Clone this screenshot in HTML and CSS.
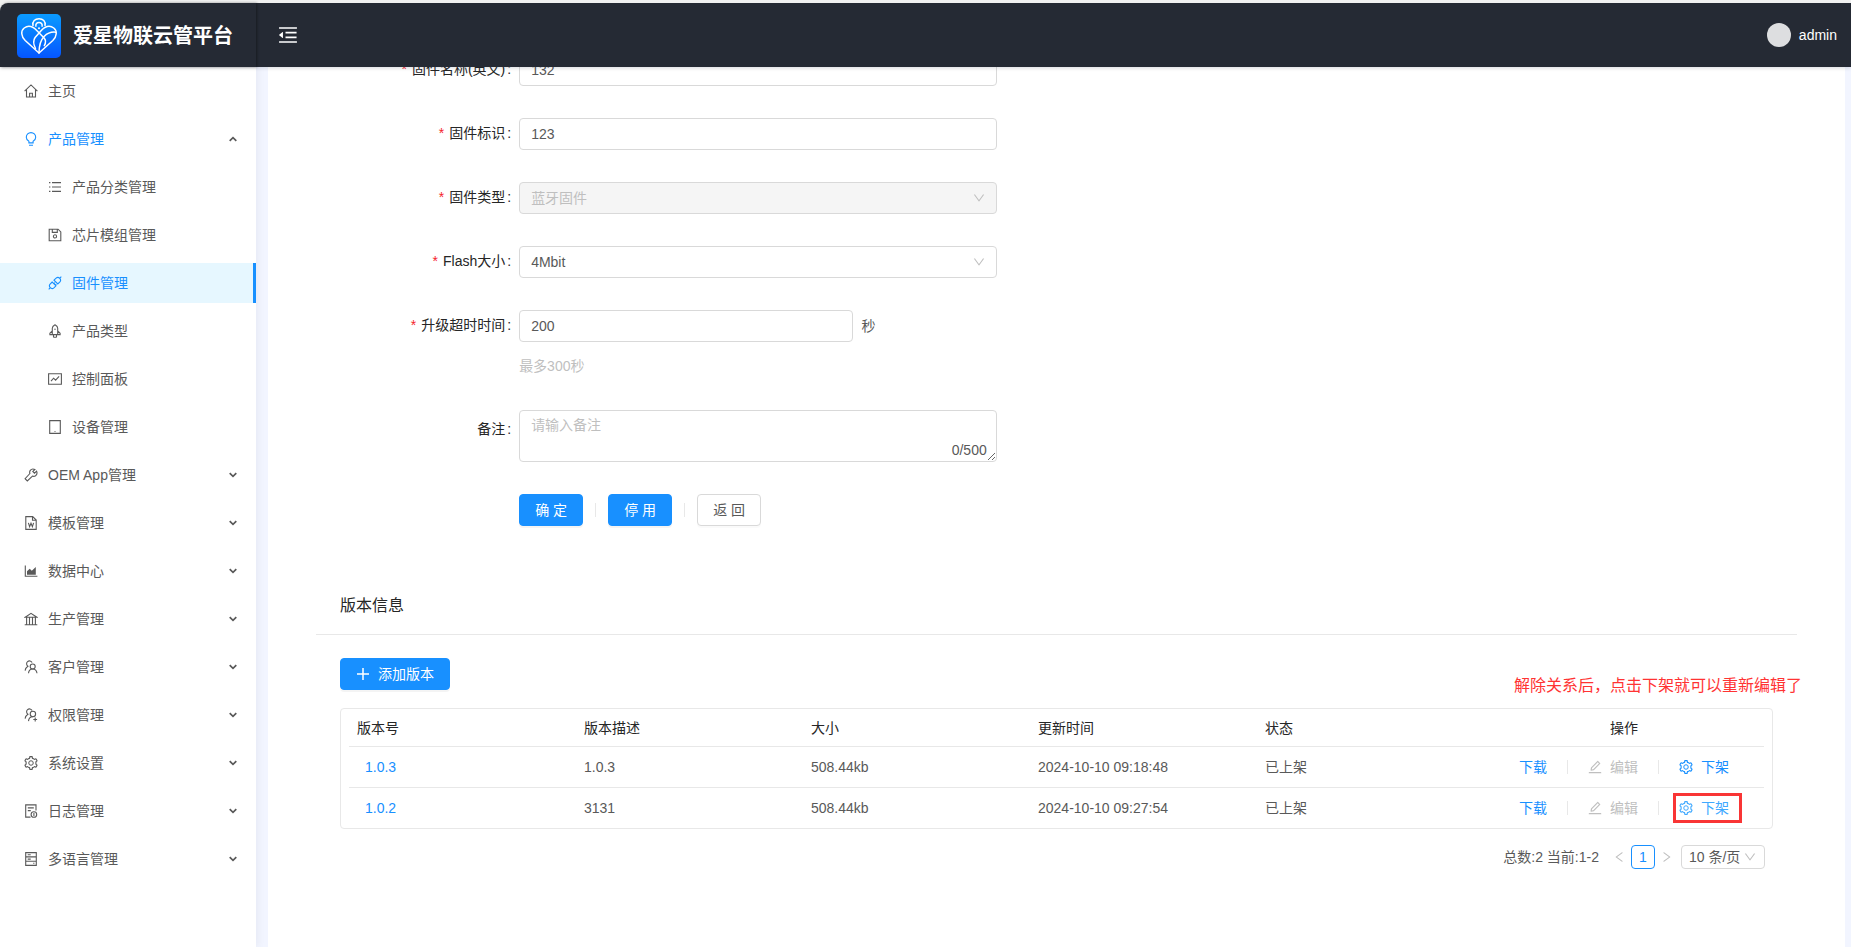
FILE: index.html
```html
<!DOCTYPE html>
<html lang="zh-CN">
<head>
<meta charset="utf-8">
<meta name="viewport" content="width=device-width, initial-scale=1">
<title>爱星物联云管平台</title>
<link rel="stylesheet" href="styles.css">
</head>
<body>
<svg class="sprite" aria-hidden="true">
  <symbol id="i-down" viewBox="64 64 896 896"><path d="M884 256h-75c-5.1 0-9.9 2.5-12.9 6.6L512 654.2 227.9 262.6c-3-4.1-7.8-6.6-12.9-6.6h-75c-6.5 0-10.3 7.4-6.5 12.7l352.6 486.1c12.8 17.6 39 17.6 51.7 0l352.6-486.1c3.9-5.3.1-12.7-6.4-12.7z"/></symbol>
  <symbol id="i-caret" viewBox="0 0 10 10"><path d="M1.7 3.2 5 6.4 8.3 3.2" fill="none" stroke="currentColor" stroke-width="1.7"/></symbol>
  <symbol id="i-setting" viewBox="64 64 896 896"><path d="M924.8 625.7l-65.5-56c3.1-19 4.7-38.4 4.7-57.8s-1.6-38.8-4.7-57.8l65.5-56a32.03 32.03 0 0 0 9.3-35.2l-.9-2.6a443.74 443.74 0 0 0-79.7-137.9l-1.8-2.1a32.12 32.12 0 0 0-35.1-9.5l-81.3 28.9c-30-24.6-63.5-44-99.7-57.6l-15.7-85a32.05 32.05 0 0 0-25.8-25.7l-2.7-.5c-52.1-9.4-106.9-9.4-159 0l-2.7.5a32.05 32.05 0 0 0-25.8 25.7l-15.8 85.4a351.86 351.86 0 0 0-99 57.4l-81.9-29.1a32 32 0 0 0-35.1 9.5l-1.8 2.1a446.02 446.02 0 0 0-79.7 137.9l-.9 2.6c-4.5 12.5-.8 26.5 9.3 35.2l66.3 56.6c-3.1 18.8-4.6 38-4.6 57.1 0 19.2 1.5 38.4 4.6 57.1L99 625.5a32.03 32.03 0 0 0-9.3 35.2l.9 2.6c18.1 50.4 44.9 96.9 79.7 137.9l1.8 2.1a32.12 32.12 0 0 0 35.1 9.5l81.9-29.1c29.8 24.5 63.1 43.9 99 57.4l15.8 85.4a32.05 32.05 0 0 0 25.8 25.7l2.7.5a449.4 449.4 0 0 0 159 0l2.7-.5a32.05 32.05 0 0 0 25.8-25.7l15.7-85a350 350 0 0 0 99.7-57.6l81.3 28.9a32 32 0 0 0 35.1-9.5l1.8-2.1c34.8-41.1 61.6-87.5 79.7-137.9l.9-2.6c4.5-12.3.8-26.3-9.3-35zM788.3 465.9c2.5 15.1 3.8 30.6 3.8 46.1s-1.3 31-3.8 46.1l-6.6 40.1 74.7 63.9a370.03 370.03 0 0 1-42.6 73.6L721 702.8l-31.4 25.8c-23.9 19.6-50.5 35-79.3 45.8l-38.1 14.3-17.9 97a377.5 377.5 0 0 1-85 0l-17.9-97.2-37.8-14.5c-28.5-10.8-55-26.2-78.7-45.7l-31.4-25.9-93.4 33.2c-17-22.9-31.2-47.6-42.6-73.6l75.5-64.5-6.5-40c-2.4-14.9-3.7-30.3-3.7-45.5 0-15.3 1.2-30.6 3.7-45.5l6.5-40-75.5-64.5c11.3-26.1 25.6-50.7 42.6-73.6l93.4 33.2 31.4-25.9c23.7-19.5 50.2-34.9 78.7-45.7l37.9-14.3 17.9-97.2c28.1-3.2 56.8-3.2 85 0l17.9 97 38.1 14.3c28.7 10.8 55.4 26.2 79.3 45.8l31.4 25.8 92.8-32.9c17 22.9 31.2 47.6 42.6 73.6L781.8 426l6.5 39.9z"/><circle cx="512" cy="512" r="144" fill="none" stroke="currentColor" stroke-width="64"/></symbol>
  <symbol id="i-edit" viewBox="64 64 896 896"><path d="M257.7 752c2 0 4-.2 6-.5L431.9 722c2-.4 3.9-1.3 5.3-2.8l423.9-423.9a9.96 9.96 0 0 0 0-14.1L694.9 114.9c-1.9-1.9-4.4-2.9-7.1-2.9s-5.2 1-7.1 2.9L256.8 538.8c-1.5 1.5-2.4 3.3-2.8 5.3l-29.5 168.2a33.5 33.5 0 0 0 9.4 29.8c6.6 6.4 14.9 9.9 23.8 9.9zm67.4-174.4L687.8 215l73.3 73.3-362.7 362.6-88.9 15.7 15.6-89zM880 836H144c-17.7 0-32 14.3-32 32v36c0 4.4 3.6 8 8 8h784c4.4 0 8-3.6 8-8v-36c0-17.7-14.3-32-32-32z"/></symbol>
  <symbol id="i-fold" viewBox="64 64 896 896"><path d="M408 442h480c4.400 0 8-3.600 8-8v-56c0-4.400-3.600-8-8-8H408c-4.400 0-8 3.600-8 8v56c0 4.400 3.600 8 8 8zm-8 204c0 4.400 3.600 8 8 8h480c4.400 0 8-3.600 8-8v-56c0-4.400-3.600-8-8-8H408c-4.400 0-8 3.600-8 8v56zm504-486H120c-4.400 0-8 3.600-8 8v56c0 4.400 3.600 8 8 8h784c4.400 0 8-3.600 8-8v-56c0-4.400-3.600-8-8-8zm0 632H120c-4.400 0-8 3.600-8 8v56c0 4.400 3.600 8 8 8h784c4.400 0 8-3.600 8-8v-56c0-4.400-3.600-8-8-8zM115.400 518.900L271.700 642c5.800 4.600 14.400.5 14.400-6.900V388.900c0-7.400-8.500-11.500-14.400-6.900L115.400 505.100a8.740 8.740 0 0 0 0 13.800z"/></symbol>
  <symbol id="i-home" viewBox="0 0 14 14"><path d="M.6 7.100 7 .9l6.400 6.200M2.500 5.800v7.200h9V5.800M5.600 13V9.200h2.800V13" class="line"/></symbol>
  <symbol id="i-bulb" viewBox="0 0 14 14"><path d="M4.900 10.900V9.300C3.200 8.400 2.300 6.900 2.300 5.300a4.700 4.700 0 0 1 9.400 0c0 1.600-.9 3.100-2.600 4v1.600zM5 13.300h4" class="line"/></symbol>
  <symbol id="i-list" viewBox="0 0 14 14"><path d="M4 2.600h9M4 7h9M4 11.400h9M1 2.600h1.400M1 7h1.400M1 11.400h1.400" class="line"/></symbol>
  <symbol id="i-save" viewBox="0 0 14 14"><path d="M1.200 1.200h8.900l2.700 2.700v8.900H1.200zM4.300 1.500v2.900h5V1.500" class="line"/><circle cx="7" cy="8.400" r="1.600" class="line"/></symbol>
  <symbol id="i-api" viewBox="0 0 14 14"><path d="M6 4.200 8.100 2.100a2.700 2.700 0 0 1 3.800 3.800L9.800 8zM4.200 6 2.100 8.100a2.700 2.700 0 0 0 3.800 3.800L8 9.800zM11.900 2.100 13.300.7M2.100 11.900.7 13.300M5.900 7.700l1-1M7.300 9.100l1-1" class="line"/></symbol>
  <symbol id="i-rocket" viewBox="0 0 14 14"><path d="M4.300 10.600V4.300C4.300 2.900 5.700 1.500 7 .8c1.300.7 2.700 2.100 2.700 3.500v6.300zM4.300 7 1.900 9.200v1.400h10.200V9.200L9.700 7M5.500 11v1.900c1 .5 2 .5 3 0V11" class="line"/><circle cx="7" cy="5.300" r=".7"/></symbol>
  <symbol id="i-fund" viewBox="0 0 14 14"><path d="M.6 1.800h12.800v10.400H.6zM3 9.200l2.600-3 2 2 3.500-3.800" class="line"/></symbol>
  <symbol id="i-tablet" viewBox="0 0 14 14"><path d="M1.700.6h10.600v12.800H1.700z" class="line"/><circle cx="7" cy="11.500" r=".6"/></symbol>
  <symbol id="i-tool" viewBox="0 0 14 14"><path d="M12.600 3.100 10.500 5.200 8.800 3.500l2.100-2.100C9.200.7 7.300 1 6.300 2.400c-.7 1-.8 2.100-.4 3.100L1.100 10.700l2.200 2.200L8.500 8.100c1 .4 2.100.3 3.100-.4 1.400-1 1.700-2.900 1-4.600z" class="line"/></symbol>
  <symbol id="i-word" viewBox="0 0 14 14"><path d="M1.800.6h6.900l3.500 3.500v9.300H1.800zM8.500.8v3.500H12M4.400 6.800l1.200 3.900L7 7.200l1.400 3.500 1.200-3.900" class="line"/></symbol>
  <symbol id="i-area" viewBox="0 0 14 14"><path d="M1.300 1.500v10.800h12.100" class="line"/><path d="M3 10.700V7.300l2.700-2.500 2.100 1.900L11.800 3v7.700z"/></symbol>
  <symbol id="i-bank" viewBox="0 0 14 14"><path d="M1.200 5.200 7 1.300l5.800 3.900zM.7 12.800h12.600M2.600 5.500v7M5.500 5.500v7M8.500 5.500v7M11.400 5.500v7" class="line"/></symbol>
  <symbol id="i-team" viewBox="0 0 14 14"><path d="M8.100 2.500A2.900 2.900 0 1 0 3.900 6.200C2.300 7.200 1.300 8.700 1.100 10.600" class="line"/><circle cx="8.700" cy="6.500" r="2.500" class="line"/><path d="M4.500 13.300c.2-2.600 1.800-4.300 4.200-4.300s4 1.700 4.300 4.300" class="line"/></symbol>
  <symbol id="i-useradd" viewBox="0 0 14 14"><path d="M8.100 2.500A2.900 2.900 0 1 0 3.900 6.200C2.300 7.200 1.300 8.700 1.100 10.600" class="line"/><circle cx="8.900" cy="6" r="2.700" class="line"/><path d="M4.500 13.100c.2-2.600 1.800-4.300 4.300-4.300M11.200 9.600v3.800M9.300 11.500h3.800" class="line"/></symbol>
  <symbol id="i-log" viewBox="0 0 14 14"><path d="M12 6.500V.9H1.700v12.200h4.800M3.800 3.900h6M3.800 6.600h3" class="line"/><circle cx="9.900" cy="10.500" r="2.800" class="line"/><path d="M9.900 9v2.900" class="line"/></symbol>
  <symbol id="i-db" viewBox="0 0 14 14"><path d="M1.700.6h10.600v12.800H1.700zM1.700 4.900h10.600M1.700 9.200h10.600M3.700 2.800h3M3.700 7.100h3M9.200 11.300h1.200" class="line"/></symbol>
  <symbol id="i-plus" viewBox="0 0 14 14"><path d="M7 1v12M1 7h12" fill="none" stroke="currentColor" stroke-width="1.500"/></symbol>
</svg>

<header class="topbar">
  <div class="bar">
    <div class="brand">
      <svg class="logo" viewBox="0 0 44 44" aria-hidden="true">
        <defs><linearGradient id="logo-bg" x1="0" y1="0" x2="0" y2="1"><stop offset="0" stop-color="#0a9bff"/><stop offset="1" stop-color="#0556ff"/></linearGradient></defs>
        <rect width="44" height="44" rx="5" fill="url(#logo-bg)"/>
        <g fill="none" stroke="#fff" stroke-width="1.500" stroke-linecap="round">
          <path d="M22 39 8.200 26.500C4 22.500 3.600 16.800 7.200 14c4-3 8.800-1.300 12.300 2.200l7.600 7.800c1.800 2 1.800 4.800.2 7.600"/>
          <path d="M22 39l13.800-12.500c4.200-4 4.600-9.700 1-12.500-4-3-8.800-1.300-12.300 2.200l-6.400 7.300c-2 2.800-1.800 6.700.4 11"/>
          <path d="M38.800 18.200c-5-.6-8.700 1.300-11.700 4.300-3.500 3.700-5 7.900-5.100 16"/>
          <path d="M16 11.500C15.200 7.500 18 4.700 22 4.700s6.800 2.800 6 6.800"/>
          <path d="M18.900 12.200c-.5-2.200 1-3.800 3.100-3.800s3.600 1.600 3.100 3.800"/>
        </g>
        <circle cx="22" cy="14.300" r="1" fill="#fff"/>
      </svg>
      <h1 class="brand-name">爱星物联云管平台</h1>
    </div>
    <button class="fold" type="button" aria-label="收起菜单"><svg><use href="#i-fold"/></svg></button>
    <div class="user"><span class="avatar"></span><span>admin</span></div>
  </div>
</header>

<div class="layout">
  <nav class="sidebar">
    <a class="item" href="#"><svg><use href="#i-home"/></svg><span>主页</span></a>
    <a class="item open" href="#"><svg><use href="#i-bulb"/></svg><span>产品管理</span><svg class="caret up"><use href="#i-caret"/></svg></a>
    <a class="item sub" href="#"><svg><use href="#i-list"/></svg><span>产品分类管理</span></a>
    <a class="item sub" href="#"><svg><use href="#i-save"/></svg><span>芯片模组管理</span></a>
    <a class="item sub active" href="#"><svg><use href="#i-api"/></svg><span>固件管理</span></a>
    <a class="item sub" href="#"><svg><use href="#i-rocket"/></svg><span>产品类型</span></a>
    <a class="item sub" href="#"><svg><use href="#i-fund"/></svg><span>控制面板</span></a>
    <a class="item sub" href="#"><svg><use href="#i-tablet"/></svg><span>设备管理</span></a>
    <a class="item" href="#"><svg><use href="#i-tool"/></svg><span>OEM App管理</span><svg class="caret"><use href="#i-caret"/></svg></a>
    <a class="item" href="#"><svg><use href="#i-word"/></svg><span>模板管理</span><svg class="caret"><use href="#i-caret"/></svg></a>
    <a class="item" href="#"><svg><use href="#i-area"/></svg><span>数据中心</span><svg class="caret"><use href="#i-caret"/></svg></a>
    <a class="item" href="#"><svg><use href="#i-bank"/></svg><span>生产管理</span><svg class="caret"><use href="#i-caret"/></svg></a>
    <a class="item" href="#"><svg><use href="#i-team"/></svg><span>客户管理</span><svg class="caret"><use href="#i-caret"/></svg></a>
    <a class="item" href="#"><svg><use href="#i-useradd"/></svg><span>权限管理</span><svg class="caret"><use href="#i-caret"/></svg></a>
    <a class="item" href="#"><svg><use href="#i-setting"/></svg><span>系统设置</span><svg class="caret"><use href="#i-caret"/></svg></a>
    <a class="item" href="#"><svg><use href="#i-log"/></svg><span>日志管理</span><svg class="caret"><use href="#i-caret"/></svg></a>
    <a class="item" href="#"><svg><use href="#i-db"/></svg><span>多语言管理</span><svg class="caret"><use href="#i-caret"/></svg></a>
  </nav>

  <main class="sheet">
    <form class="form">
      <div class="row">
        <label class="label required" for="name-en">固件名称(英文)</label>
        <input class="control" id="name-en" type="text" value="132">
      </div>
      <div class="row">
        <label class="label required" for="code">固件标识</label>
        <input class="control" id="code" type="text" value="123">
      </div>
      <div class="row">
        <label class="label required" for="kind">固件类型</label>
        <div class="select"><select class="control" id="kind" disabled><option>蓝牙固件</option></select><svg><use href="#i-down"/></svg></div>
      </div>
      <div class="row">
        <label class="label required" for="flash">Flash大小</label>
        <div class="select"><select class="control" id="flash"><option>4Mbit</option></select><svg><use href="#i-down"/></svg></div>
      </div>
      <div class="row">
        <label class="label required" for="timeout">升级超时时间</label>
        <div>
          <div class="with-unit"><input class="control" id="timeout" type="text" value="200"><span>秒</span></div>
          <p class="hint">最多300秒</p>
        </div>
      </div>
      <div class="row remark">
        <label class="label" for="remark">备注</label>
        <div class="area"><textarea class="control" id="remark" placeholder="请输入备注"></textarea><span class="count">0/500</span></div>
      </div>
      <div class="row">
        <div class="actions">
          <button class="btn primary" type="button">确 定</button><i class="sep"></i>
          <button class="btn primary" type="button">停 用</button><i class="sep"></i>
          <button class="btn" type="button">返 回</button>
        </div>
      </div>
    </form>

    <section class="versions">
      <h2 class="section-title">版本信息</h2>
      <div class="section-body">
        <div class="toolbar">
          <button class="btn primary add" type="button"><svg><use href="#i-plus"/></svg>添加版本</button>
          <p class="note">解除关系后，点击下架就可以重新编辑了</p>
        </div>
        <div class="table-box">
          <table class="table">
            <thead>
              <tr><th>版本号</th><th>版本描述</th><th>大小</th><th>更新时间</th><th>状态</th><th class="ops-col">操作</th></tr>
            </thead>
            <tbody>
              <tr>
                <td><a class="ver" href="#">1.0.3</a></td><td>1.0.3</td><td>508.44kb</td><td>2024-10-10 09:18:48</td><td>已上架</td>
                <td><div class="ops">
                  <a class="op" href="#">下载</a><i class="sep"></i>
                  <button class="op off" type="button" disabled><svg><use href="#i-edit"/></svg>编辑</button><i class="sep"></i>
                  <a class="op" href="#"><svg><use href="#i-setting"/></svg>下架</a>
                </div></td>
              </tr>
              <tr>
                <td><a class="ver" href="#">1.0.2</a></td><td>3131</td><td>508.44kb</td><td>2024-10-10 09:27:54</td><td>已上架</td>
                <td><div class="ops">
                  <a class="op" href="#">下载</a><i class="sep"></i>
                  <button class="op off" type="button" disabled><svg><use href="#i-edit"/></svg>编辑</button><i class="sep"></i>
                  <a class="op hover marked" href="#"><svg><use href="#i-setting"/></svg>下架</a>
                </div></td>
              </tr>
            </tbody>
          </table>
        </div>
        <div class="pager">
          <span class="total">总数:2 当前:1-2</span>
          <button class="arrow prev" type="button" aria-label="上一页"><svg><use href="#i-down"/></svg></button>
          <button class="page" type="button">1</button>
          <button class="arrow next" type="button" aria-label="下一页"><svg><use href="#i-down"/></svg></button>
          <div class="select small"><select class="control" aria-label="每页条数"><option>10 条/页</option></select><svg><use href="#i-down"/></svg></div>
        </div>
      </div>
    </section>
  </main>
</div>
</body>
</html>
```
FILE: styles.css
```css
* { box-sizing: border-box; }

body {
  margin: 0;
  background: #f2f5ff;
  color: #595959;
  font: 14px/22px "Liberation Sans", "Noto Sans CJK SC", sans-serif;
}

h1, h2, p { margin: 0; font-weight: 400; }
a { color: #1890ff; text-decoration: none; }
svg { display: block; flex: none; width: 14px; height: 14px; fill: currentColor; }
.sprite { position: absolute; width: 0; height: 0; }
.line { fill: none; stroke: currentColor; stroke-width: 1.1; }
button, input, select, textarea { font: inherit; color: inherit; }
button { background: none; border: 0; padding: 0; }

/* Top bar stays over the scrolled content */
.topbar {
  position: fixed;
  inset: 0 0 auto;
  z-index: 10;
  padding-top: 3px;
  background: #f1f1f1;
  box-shadow: 0 1px 4px rgba(0, 21, 41, .16);
}
.bar {
  display: flex;
  align-items: center;
  height: 64px;
  border-top-left-radius: 8px;
  background: #252a34;
  color: #fff;
}
.brand {
  display: flex;
  align-items: center;
  gap: 12px;
  width: 256px;
  height: 64px;
  padding: 2px 17px 0;
  border-top-left-radius: 8px;
  box-shadow: 1px 0 3px rgba(0, 0, 0, .4);
}
.logo { width: 44px; height: 44px; }
.brand-name { font-size: 20px; line-height: 28px; font-weight: 700; white-space: nowrap; }
.fold { margin-left: 22px; }
.fold svg { width: 20px; height: 20px; }
.user { display: flex; align-items: center; gap: 8px; margin-left: auto; padding-right: 14px; }
.avatar { width: 24px; height: 24px; border-radius: 50%; background: #dddee0; }

.layout { display: grid; grid-template-columns: 256px minmax(0, 1fr); min-height: 100vh; }

.sidebar {
  display: flex;
  flex-direction: column;
  gap: 8px;
  padding-top: 71px;
  background: #fff;
  box-shadow: 2px 0 8px rgba(0, 21, 41, .05);
}
.item { display: flex; align-items: center; gap: 10px; height: 40px; padding: 0 18px 0 24px; color: #595959; }
.item.sub { padding-left: 48px; }
.item.open { color: #1890ff; }
.item.active { color: #1890ff; background: #e6f7ff; border-right: 3px solid #1890ff; }
.caret { width: 10px; height: 10px; margin-left: auto; color: #595959; }
.caret.up { transform: scaleY(-1); }

.sheet { margin: 0 6px 0 12px; padding: 54px 48px 0; background: #fff; }

.form { display: grid; gap: 32px; padding: 0 24px; }
.row { display: grid; grid-template-columns: 12.5% 33.33%; }
.label {
  justify-self: end;
  padding-right: 8px;
  line-height: 30px;
  color: #262626;
  white-space: nowrap;
}
.label::after { content: ":"; margin-left: 2px; }
.label.required::before { content: "*"; margin-right: 5px; color: #f5222d; }
.remark .label { padding-top: 4px; }

.control {
  display: block;
  width: 100%;
  height: 32px;
  margin: 0;
  padding: 0 11px;
  border: 1px solid #d9d9d9;
  border-radius: 4px;
  background: #fff;
  color: #595959;
  appearance: none;
}
.control:disabled { background: #f5f5f5; color: #bfbfbf; opacity: 1; }
textarea.control { height: 52px; padding: 3px 11px; resize: vertical; }
.control::placeholder { color: #bfbfbf; }
.select { position: relative; }
.select svg { position: absolute; top: 50%; right: 12px; width: 12px; height: 12px; margin-top: -6px; color: #bfbfbf; }
.with-unit { display: flex; align-items: center; gap: 8px; }
.with-unit .control { width: 70%; }
.hint { padding-top: 12px; line-height: 24px; color: #bfbfbf; }
.area { position: relative; }
.count { position: absolute; right: 10px; bottom: 1px; }

.actions { grid-column: 2; display: flex; align-items: center; }
.btn {
  height: 32px;
  min-width: 64px;
  border: 1px solid #d9d9d9;
  border-radius: 4px;
  background: #fff;
  box-shadow: 0 2px 0 rgba(0, 0, 0, .02);
}
.btn.primary { border-color: #1890ff; background: #1890ff; color: #fff; box-shadow: 0 2px 0 rgba(0, 0, 0, .045); }
.sep { flex: none; width: 1px; height: 14px; margin: 0 12px; background: #e8e8e8; }

.versions { margin-top: 52px; }
.section-title {
  padding: 16px 24px;
  border-bottom: 1px solid #e8e8e8;
  color: #262626;
  font-size: 16px;
  line-height: 24px;
}
.section-body { padding: 23px 24px 0; }
.toolbar { position: relative; }
.add { display: flex; align-items: center; gap: 8px; padding: 0 15px; }
.note { position: absolute; right: -29px; bottom: -8px; color: #ff3333; font-size: 16px; line-height: 24px; white-space: nowrap; }

.table-box { margin-top: 18px; padding: 0 8px; border: 1px solid #e8e8e8; border-radius: 4px; }
.table { width: 100%; border-collapse: separate; border-spacing: 0; table-layout: fixed; }
.table th, .table td { height: 41px; padding: 0 8px; border-bottom: 1px solid #e8e8e8; text-align: left; }
.table th { height: 38px; color: #262626; font-weight: 400; }
.table tbody tr:last-child td { height: 40px; border-bottom: 0; }
.table .ops-col { width: 280px; text-align: center; }
.ver { padding-left: 8px; }
.ops { display: flex; align-items: center; justify-content: center; }
.ops .sep { margin: 0 20px; }
.op { position: relative; display: flex; align-items: center; gap: 8px; color: #1890ff; }
.op.off { color: #bfbfbf; }
.op.hover { color: #40a9ff; }
.marked::after { content: ""; position: absolute; inset: -4px -13px -4px -6px; border: 3px solid #f93535; }

.pager { display: flex; align-items: center; justify-content: flex-end; margin-top: 16px; padding-right: 8px; }
.total { margin-right: 14px; }
.arrow { color: #bfbfbf; }
.arrow svg { width: 12px; height: 12px; }
.prev svg { transform: rotate(90deg); }
.next svg { transform: rotate(-90deg); }
.page { width: 24px; height: 24px; margin: 0 6px; border: 1px solid #1890ff; border-radius: 4px; color: #1890ff; }
.small { width: 84px; margin-left: 8px; }
.small .control { height: 24px; padding: 0 7px; }
.small svg { right: 9px; }
```
